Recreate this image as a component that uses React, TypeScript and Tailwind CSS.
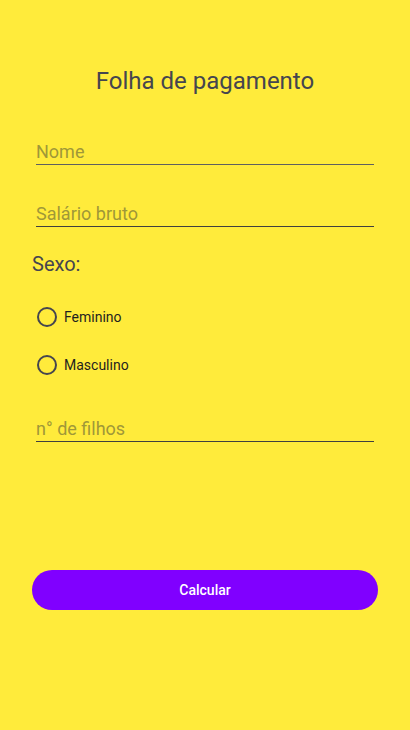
export default function App() {
  const fields = {
    hint: "text-[#9f9838]",
  };

  return (
    <div className="w-full h-[730px] bg-[#ffeb3b] font-['Roboto',sans-serif] flex flex-col">
      <h1 className="mt-[67px] text-center text-[24px] leading-[28px] text-[#45454f]">
        Folha de pagamento
      </h1>

      <div className="mt-[45px] mx-[36px] h-[25px] border-b border-[#5f5f5f]">
        <span className={`block text-[18px] leading-[24px] ${fields.hint}`}>Nome</span>
      </div>

      <div className="mt-[37px] mx-[36px] h-[25px] border-b border-[#3f3f3f]">
        <span className={`block text-[18px] leading-[24px] ${fields.hint}`}>Salário bruto</span>
      </div>

      <div className="mt-[23px] ml-[32px] text-[20px] leading-[28px] text-[#45454f]">Sexo:</div>

      <div className="mt-[15px] flex flex-col">
        {["Feminino", "Masculino"].map((label) => (
          <div key={label} className="h-[48px] flex items-center pl-[37px]">
            <span className="w-[20px] h-[20px] rounded-full border-2 border-[#45454f]" />
            <span className="ml-[7px] text-[14px] leading-[20px] text-[#1f1f1f]">{label}</span>
          </div>
        ))}
      </div>

      <div className="mt-[28px] mx-[36px] h-[25px] border-b border-[#3f3f3f]">
        <span className={`block text-[18px] leading-[24px] ${fields.hint}`}>n° de filhos</span>
      </div>

      <button className="mt-[128px] mx-[32px] h-[40px] rounded-full bg-[#8000ff] text-white text-[14px] font-medium">
        Calcular
      </button>
    </div>
  );
}
